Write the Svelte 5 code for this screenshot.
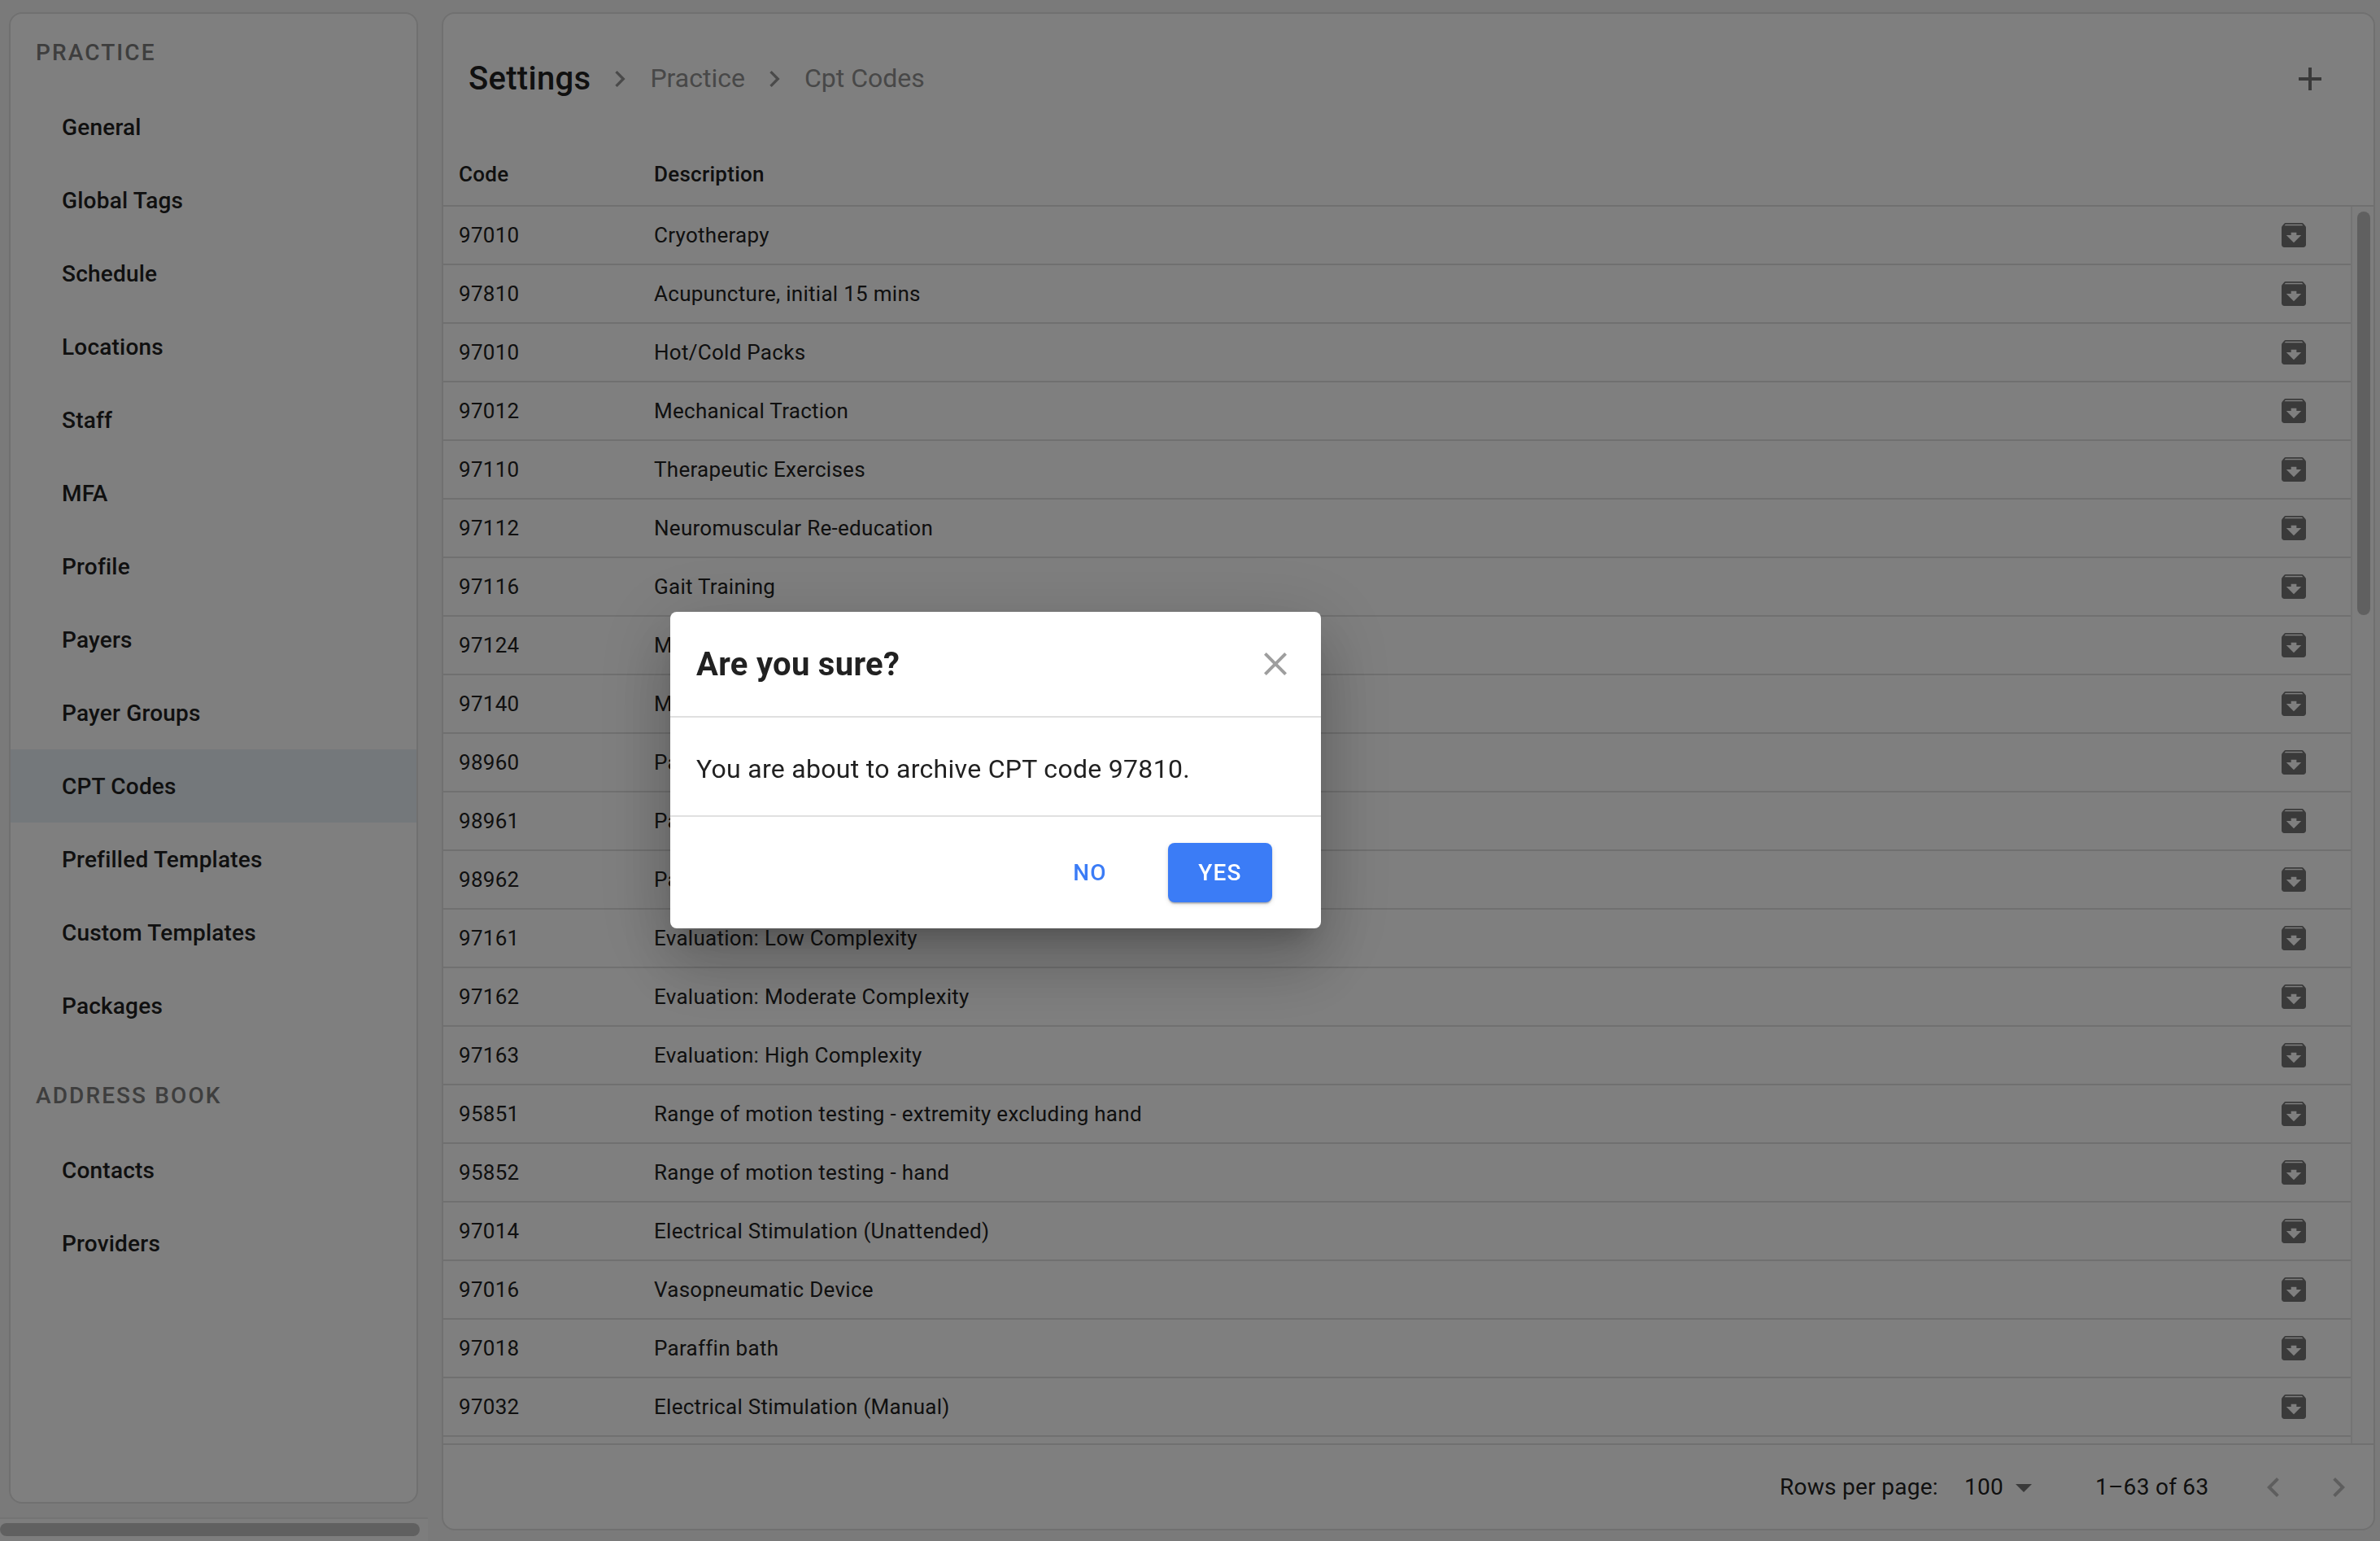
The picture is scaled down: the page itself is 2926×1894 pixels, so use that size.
<script lang="ts">
  const practice = ['General','Global Tags','Schedule','Locations','Staff','MFA','Profile','Payers','Payer Groups','CPT Codes','Prefilled Templates','Custom Templates','Packages'];
  const addressBook = ['Contacts','Providers'];
  const rows = [
    ['97010','Cryotherapy'],
    ['97810','Acupuncture, initial 15 mins'],
    ['97010','Hot/Cold Packs'],
    ['97012','Mechanical Traction'],
    ['97110','Therapeutic Exercises'],
    ['97112','Neuromuscular Re-education'],
    ['97116','Gait Training'],
    ['97124','Massage'],
    ['97140','Manual Therapy'],
    ['98960','Patient Education: 1'],
    ['98961','Patient Education: 2-4'],
    ['98962','Patient Education: 5-8'],
    ['97161','Evaluation: Low Complexity'],
    ['97162','Evaluation: Moderate Complexity'],
    ['97163','Evaluation: High Complexity'],
    ['95851','Range of motion testing - extremity excluding hand'],
    ['95852','Range of motion testing - hand'],
    ['97014','Electrical Stimulation (Unattended)'],
    ['97016','Vasopneumatic Device'],
    ['97018','Paraffin bath'],
    ['97032','Electrical Stimulation (Manual)'],
  ];
</script>

<div class="page">
  <div class="side-col">
    <aside class="sidebar">
      <h3 class="group">PRACTICE</h3>
      {#each practice as item}
        <div class="nav-item" class:active={item === 'CPT Codes'}>{item}</div>
      {/each}
      <h3 class="group second">ADDRESS BOOK</h3>
      {#each addressBook as item}
        <div class="nav-item">{item}</div>
      {/each}
    </aside>
    <div class="hscroll"><div class="hthumb"></div></div>
  </div>

  <main class="content">
    <header class="title-bar">
      <span class="title">Settings</span>
      <svg class="crumb-sep" viewBox="0 0 24 24"><path d="M10 6 8.59 7.41 13.17 12l-4.58 4.59L10 18l6-6z" /></svg>
      <span class="crumb">Practice</span>
      <svg class="crumb-sep" viewBox="0 0 24 24"><path d="M10 6 8.59 7.41 13.17 12l-4.58 4.59L10 18l6-6z" /></svg>
      <span class="crumb">Cpt Codes</span>
      <svg class="add" viewBox="0 0 24 24"><path d="M19 13h-6v6h-2v-6H5v-2h6V5h2v6h6v2z" /></svg>
    </header>

    <div class="table-head">
      <span class="code">Code</span>
      <span>Description</span>
    </div>

    <div class="table-wrap">
      <div class="rows">
        {#each rows as [code, desc]}
          <div class="row">
            <span class="code">{code}</span>
            <span class="desc">{desc}</span>
            <svg class="archive" viewBox="0 0 24 24"><path d="M20.54 5.23l-1.39-1.68C18.88 3.21 18.47 3 18 3H6c-.47 0-.88.21-1.16.55L3.46 5.23C3.17 5.57 3 6.02 3 6.5V19c0 1.1.9 2 2 2h14c1.1 0 2-.9 2-2V6.5c0-.48-.17-.93-.46-1.27zM12 17.5L6.5 12H10v-2h4v2h3.5L12 17.5zM5.12 5l.81-1h12l.94 1H5.12z" /></svg>
          </div>
        {/each}
      </div>
      <div class="vscroll"><div class="vthumb"></div></div>
    </div>

    <footer class="pager">
      <span>Rows per page:</span>
      <span class="per-page">100</span>
      <svg class="drop" viewBox="0 0 24 24"><path d="M7 10l5 5 5-5z" /></svg>
      <span class="range">1–63 of 63</span>
      <svg class="page-btn prev" viewBox="0 0 24 24"><path d="M15.41 7.41 14 6l-6 6 6 6 1.41-1.41L10.83 12z" /></svg>
      <svg class="page-btn next" viewBox="0 0 24 24"><path d="M10 6 8.59 7.41 13.17 12l-4.58 4.59L10 18l6-6z" /></svg>
    </footer>
  </main>
</div>

<div class="backdrop">
  <div class="dialog">
    <div class="dialog-head">
      <span class="dialog-title">Are you sure?</span>
      <svg class="close" viewBox="0 0 24 24"><path d="M19 6.41 17.59 5 12 10.59 6.41 5 5 6.41 10.59 12 5 17.59 6.41 19 12 13.41 17.59 19 19 17.59 13.41 12z" /></svg>
    </div>
    <div class="dialog-body">You are about to archive CPT code 97810.</div>
    <div class="dialog-actions">
      <button class="btn text">NO</button>
      <button class="btn primary">YES</button>
    </div>
  </div>
</div>

<style>
  :global(body) {
    margin: 0;
    background: #f5f5f5;
    font-family: Roboto, "Liberation Sans", sans-serif;
    color: #212121;
    overflow: hidden;
  }
  .page {
    display: flex;
    height: 1894px;
    width: 2926px;
    box-sizing: border-box;
  }

  /* Left column */
  .side-col {
    width: 526px;
    flex-shrink: 0;
    display: flex;
    flex-direction: column;
    padding-top: 15px;
    box-sizing: border-box;
  }
  .sidebar {
    flex: 1;
    margin: 0 12px 17px 11px;
    background: #fff;
    border: 2px solid #e0e0e0;
    border-radius: 16px;
  }
  .group {
    margin: 0;
    height: 94px;
    display: flex;
    align-items: center;
    padding-left: 31px;
    font-size: 28px;
    font-weight: 500;
    letter-spacing: 2.1px;
    color: #7c7c7c;
  }
  .group.second {
    margin-top: 18px;
  }
  .nav-item {
    height: 90px;
    display: flex;
    align-items: center;
    padding-left: 63px;
    font-size: 28px;
    font-weight: 500;
    letter-spacing: 0.2px;
  }
  .nav-item.active {
    background: #e8f0f6;
  }
  .hscroll {
    height: 29px;
    box-sizing: border-box;
    border-top: 2px solid #e8e8e8;
    background: #fafafa;
    padding-top: 5px;
  }
  .hthumb {
    width: 516px;
    height: 16px;
    border-radius: 8px;
    background: #c1c1c1;
  }

  /* Main card */
  .content {
    flex: 1;
    margin: 15px 6px 13px 17px;
    background: #fff;
    border: 2px solid #e0e0e0;
    border-radius: 16px;
    display: flex;
    flex-direction: column;
    min-width: 0;
    overflow: hidden;
  }
  .title-bar {
    height: 159px;
    flex-shrink: 0;
    display: flex;
    align-items: center;
    padding-left: 31px;
  }
  .title {
    font-size: 40px;
    font-weight: 500;
    letter-spacing: 0.3px;
  }
  .crumb {
    font-size: 32px;
    margin-bottom: 2px;
    color: #909090;
  }
  .crumb-sep {
    width: 40px;
    height: 40px;
    margin: 0 17px 0 16px;
    fill: #949494;
  }
  .add {
    width: 48px;
    height: 48px;
    margin-left: auto;
    margin-right: 54px;
    fill: #757575;
  }
  .table-head {
    height: 76px;
    flex-shrink: 0;
    display: flex;
    align-items: center;
    padding-left: 19px;
    font-size: 26px;
    font-weight: 500;
    letter-spacing: 0.28px;
    border-bottom: 2px solid #e0e0e0;
  }
  .code {
    width: 240px;
    flex-shrink: 0;
  }
  .table-wrap {
    flex: 1;
    min-height: 0;
    display: flex;
  }
  .rows {
    flex: 1;
    min-width: 0;
  }
  .row {
    height: 72px;
    box-sizing: border-box;
    display: flex;
    align-items: center;
    padding: 0 50px 0 19px;
    font-size: 26px;
    letter-spacing: 0.28px;
    border-bottom: 2px solid #e0e0e0;
  }
  .desc {
    flex: 1;
  }
  .archive {
    width: 40px;
    height: 40px;
    fill: #757575;
  }
  .vscroll {
    width: 28px;
    flex-shrink: 0;
    box-sizing: border-box;
    border-left: 2px solid #e8e8e8;
    background: #fafafa;
    padding: 6px 4px 0 6px;
  }
  .vthumb {
    height: 496px;
    border-radius: 8px;
    background: #c1c1c1;
  }
  .pager {
    height: 105px;
    flex-shrink: 0;
    box-sizing: border-box;
    border-top: 2px solid #e0e0e0;
    display: flex;
    align-items: center;
    padding-left: 1643px;
    font-size: 28px;
    letter-spacing: 0.28px;
  }
  .per-page {
    margin-left: 32px;
  }
  .drop {
    width: 48px;
    height: 48px;
    margin-left: 1px;
    fill: #757575;
  }
  .range {
    margin-left: 64px;
  }
  .page-btn {
    width: 48px;
    height: 48px;
    fill: #bdbdbd;
  }
  .prev {
    margin-left: 56px;
  }
  .next {
    margin-left: 32px;
  }

  /* Confirm dialog */
  .backdrop {
    position: fixed;
    inset: 0;
    background: rgba(0, 0, 0, 0.5);
    display: flex;
    align-items: center;
    padding-left: 824px;
  }
  .dialog {
    width: 800px;
    margin-bottom: 1px;
    background: #fff;
    border-radius: 8px;
    box-shadow: 0 22px 30px -14px rgba(0, 0, 0, 0.2), 0 48px 76px 6px rgba(0, 0, 0, 0.14), 0 18px 92px 16px rgba(0, 0, 0, 0.12);
  }
  .dialog-head {
    height: 130px;
    box-sizing: border-box;
    display: flex;
    align-items: center;
    justify-content: space-between;
    padding: 0 32px;
    border-bottom: 2px solid #e0e0e0;
  }
  .dialog-title {
    font-size: 40px;
    font-weight: 700;
    letter-spacing: 0.3px;
  }
  .close {
    width: 48px;
    height: 48px;
    fill: #9e9e9e;
  }
  .dialog-body {
    height: 122px;
    box-sizing: border-box;
    display: flex;
    align-items: center;
    padding: 6px 32px 0;
    font-size: 32px;
    letter-spacing: 0.3px;
    border-bottom: 2px solid #e0e0e0;
  }
  .dialog-actions {
    height: 137px;
    box-sizing: border-box;
    display: flex;
    justify-content: flex-end;
    align-items: flex-start;
    padding: 32px 60px 0 0;
    gap: 40px;
  }
  .btn {
    height: 73px;
    border: 0;
    border-radius: 8px;
    font-family: inherit;
    font-size: 28px;
    font-weight: 500;
    letter-spacing: 1.2px;
    padding: 0;
  }
  .btn.text {
    width: 112px;
    background: none;
    color: #3b7cf6;
  }
  .btn.primary {
    width: 128px;
    background: #3b7cf6;
    color: #fff;
    box-shadow: 0 2px 2px rgba(0, 0, 0, 0.14), 0 3px 2px -2px rgba(0, 0, 0, 0.2), 0 2px 6px rgba(0, 0, 0, 0.12);
  }
</style>
